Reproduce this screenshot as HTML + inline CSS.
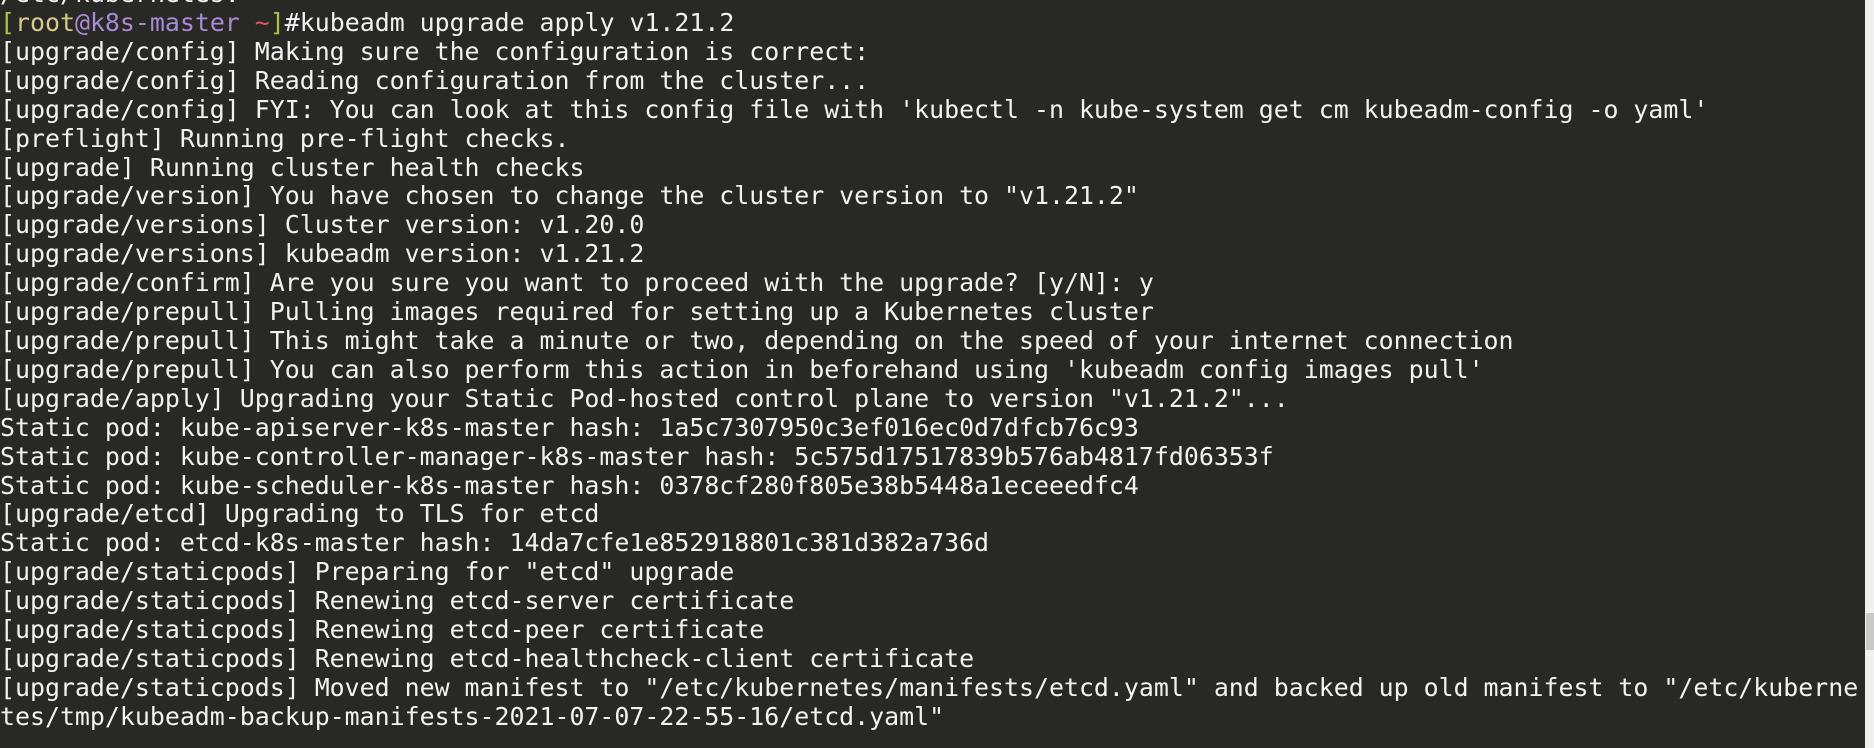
<!DOCTYPE html>
<html><head><meta charset="utf-8"><style>
html,body{margin:0;padding:0;background:#282824;width:1874px;height:748px;overflow:hidden}
pre{position:absolute;left:0;top:-19.9px;margin:0;font-family:"DejaVu Sans Mono","Liberation Mono",monospace;font-size:24.9px;line-height:28.9px;color:#f2f2f2;white-space:pre}
.g{color:#a8c34a}.y{color:#d6c98a}.p{color:#a98ad8}.r{color:#e2506c}
.tr{position:absolute;left:1865px;top:0;width:9px;height:748px;background:#f0f0f0}
.sb{position:absolute;left:1866px;top:613px;width:8px;height:37px;background:#c9c9c9}
</style></head><body>
<pre>/etc/kubernetes:
<span class="g">[</span><span class="y">root</span><span class="p">@k8s-master</span> <span class="r">~</span><span class="g">]</span>#kubeadm upgrade apply v1.21.2
[upgrade/config] Making sure the configuration is correct:
[upgrade/config] Reading configuration from the cluster...
[upgrade/config] FYI: You can look at this config file with 'kubectl -n kube-system get cm kubeadm-config -o yaml'
[preflight] Running pre-flight checks.
[upgrade] Running cluster health checks
[upgrade/version] You have chosen to change the cluster version to "v1.21.2"
[upgrade/versions] Cluster version: v1.20.0
[upgrade/versions] kubeadm version: v1.21.2
[upgrade/confirm] Are you sure you want to proceed with the upgrade? [y/N]: y
[upgrade/prepull] Pulling images required for setting up a Kubernetes cluster
[upgrade/prepull] This might take a minute or two, depending on the speed of your internet connection
[upgrade/prepull] You can also perform this action in beforehand using 'kubeadm config images pull'
[upgrade/apply] Upgrading your Static Pod-hosted control plane to version "v1.21.2"...
Static pod: kube-apiserver-k8s-master hash: 1a5c7307950c3ef016ec0d7dfcb76c93
Static pod: kube-controller-manager-k8s-master hash: 5c575d17517839b576ab4817fd06353f
Static pod: kube-scheduler-k8s-master hash: 0378cf280f805e38b5448a1eceeedfc4
[upgrade/etcd] Upgrading to TLS for etcd
Static pod: etcd-k8s-master hash: 14da7cfe1e852918801c381d382a736d
[upgrade/staticpods] Preparing for "etcd" upgrade
[upgrade/staticpods] Renewing etcd-server certificate
[upgrade/staticpods] Renewing etcd-peer certificate
[upgrade/staticpods] Renewing etcd-healthcheck-client certificate
[upgrade/staticpods] Moved new manifest to "/etc/kubernetes/manifests/etcd.yaml" and backed up old manifest to "/etc/kuberne
tes/tmp/kubeadm-backup-manifests-2021-07-07-22-55-16/etcd.yaml"</pre>
<div class="tr"></div>
<div class="sb"></div>
</body></html>
